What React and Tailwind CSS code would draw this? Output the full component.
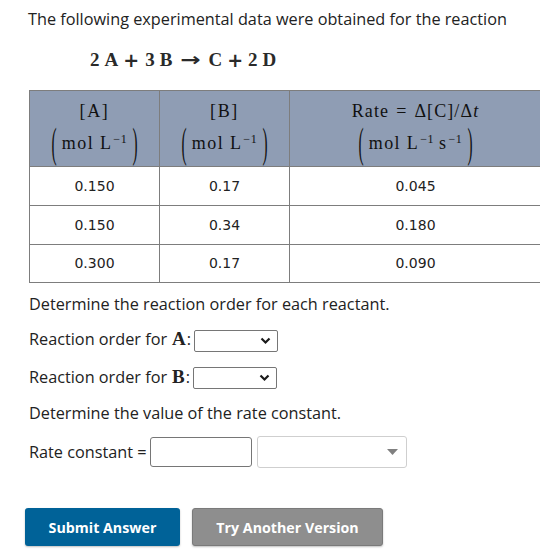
import React from "react";

const sans = { fontFamily: '"Open Sans", sans-serif' };
const serif = { fontFamily: '"Liberation Serif", "DejaVu Serif", serif' };
const dsans = { fontFamily: '"DejaVu Sans", sans-serif' };

function Paren({ children }) {
  return (
    <span className="inline-flex items-center leading-[20px]" style={serif}>
      <span className="inline-block origin-center scale-y-[2.4] scale-x-[0.85] text-[18px] leading-[20px] font-light">(</span>
      <span className="mx-[5px] text-[18px] leading-[20px] tracking-[1.4px]">{children}</span>
      <span className="inline-block origin-center scale-y-[2.4] scale-x-[0.85] text-[18px] leading-[20px] font-light">)</span>
    </span>
  );
}

function Sup({ children }) {
  return <sup className="ml-[1px] text-[12px] leading-none tracking-[0.5px]">{children}</sup>;
}

function Chevron() {
  return (
    <svg width="11" height="8" viewBox="0 0 11 8" className="mr-[6px]">
      <path d="M1.5 1.5 L5.5 5.5 L9.5 1.5" fill="none" stroke="#1a1a1a" strokeWidth="2.2" />
    </svg>
  );
}

function SmallSelect() {
  return (
    <span className="inline-flex h-[22px] w-[84px] items-center justify-end rounded-[2px] border border-[#767676] bg-white align-middle">
      <Chevron />
    </span>
  );
}

function HeaderCell({ top, bottom, track = "tracking-[1.6px]" }) {
  return (
    <th className="border border-[#7d7d7d] p-0 font-normal">
      <div className="flex flex-col items-center pb-[3px]" style={serif}>
        <div className={"flex h-[20px] items-center text-[18px] leading-[20px] " + track}>{top}</div>
        <div className="mt-[12px] flex h-[20px] items-center">
          <Paren>{bottom}</Paren>
        </div>
      </div>
    </th>
  );
}

export default function App() {
  const rows = [
    ["0.150", "0.17", "0.045"],
    ["0.150", "0.34", "0.180"],
    ["0.300", "0.17", "0.090"],
  ];
  return (
    <div className="relative h-[555px] w-[540px] overflow-hidden bg-white text-[#222]" style={sans}>
      <div className="pl-[28px] pt-[7px] text-[16.25px] leading-[24px]">
        The following experimental data were obtained for the reaction
      </div>
      <div className="mt-[17px] flex items-center pl-[90px] text-[19px] leading-[24px] font-bold text-[#2a2a2a]" style={serif}>
        <span>2</span>
        <span className="ml-[5px]">A</span>
        <span className="ml-[5px] text-[19px]" style={dsans}>+</span>
        <span className="ml-[6px]">3</span>
        <span className="ml-[5px]">B</span>
        <span className="ml-[11px] inline-block scale-x-[1.35] text-[18px]" style={dsans}>→</span>
        <span className="ml-[10px]">C</span>
        <span className="ml-[5px] text-[19px]" style={dsans}>+</span>
        <span className="ml-[5px]">2</span>
        <span className="ml-[5px]">D</span>
      </div>
      <table className="ml-[29px] mt-[18px] w-[512px] border-collapse table-fixed">
        <colgroup>
          <col className="w-[130px]" />
          <col className="w-[130px]" />
          <col className="w-[252px]" />
        </colgroup>
        <thead>
          <tr className="h-[76px] bg-[#8f9db4] text-[#111]">
            <HeaderCell top="[A]" bottom={<>mol L<Sup>−1</Sup></>} />
            <HeaderCell top="[B]" bottom={<>mol L<Sup>−1</Sup></>} />
            <HeaderCell
              track="tracking-[1.1px]"
              top={<>Rate<span className="mx-[7px]">=</span>Δ[C]/Δ<i>t</i></>}
              bottom={<>mol L<Sup>−1</Sup><span className="ml-[5px]">s</span><Sup>−1</Sup></>}
            />
          </tr>
        </thead>
        <tbody>
          {rows.map((r, i) => (
            <tr key={i} className={i === 2 ? "h-[38px]" : "h-[39px]"}>
              {r.map((c, j) => (
                <td
                  key={j}
                  className="border border-[#7d7d7d] p-0 text-center text-[14px] text-[#222]"
                  style={{ fontFamily: '"DejaVu Sans", Verdana, sans-serif' }}
                >
                  {c}
                </td>
              ))}
            </tr>
          ))}
        </tbody>
      </table>
      <div className="pl-[29px] text-[16.25px] leading-[24px]">
        <div className="mt-[9px]">Determine the reaction order for each reactant.</div>
        <div className="mt-[11px] flex items-center">
          <span>Reaction order for </span>
          <span className="ml-[5px] text-[19px] font-bold" style={serif}>A</span>
          <span className="ml-[1px]">:</span>
          <span className="ml-[3px]"><SmallSelect /></span>
        </div>
        <div className="mt-[13px] flex items-center">
          <span>Reaction order for </span>
          <span className="ml-[5px] text-[19px] font-bold" style={serif}>B</span>
          <span className="ml-[1px]">:</span>
          <span className="ml-[3px]"><SmallSelect /></span>
        </div>
        <div className="mt-[12px]">Determine the value of the rate constant.</div>
        <div className="mt-[11px] flex items-center">
          <span>Rate constant =</span>
          <span className="ml-[3px] h-[30px] w-[102px] rounded-[3px] border border-[#767676] bg-white" />
          <span className="ml-[5px] flex h-[32px] w-[150px] items-center justify-end rounded-[3px] border border-[#cfcfcf] bg-white pr-[8px]">
            <svg width="11" height="7" viewBox="0 0 11 7">
              <path d="M0 0 L11 0 L5.5 6 Z" fill="#808080" />
            </svg>
          </span>
        </div>
      </div>
      <div className="mt-[40px] flex gap-[12px] pl-[25px]">
        <button className="h-[38px] w-[155px] rounded-[3px] bg-[#006298] text-[14.25px] font-bold text-white shadow-[0_1px_2px_rgba(0,0,0,0.25)]" style={sans}>
          Submit Answer
        </button>
        <button className="h-[38px] w-[191px] rounded-[3px] border border-[#7a7a7a] bg-[#8e8e8e] text-[14.25px] font-bold text-white shadow-[0_1px_2px_rgba(0,0,0,0.25)]" style={sans}>
          Try Another Version
        </button>
      </div>
    </div>
  );
}
